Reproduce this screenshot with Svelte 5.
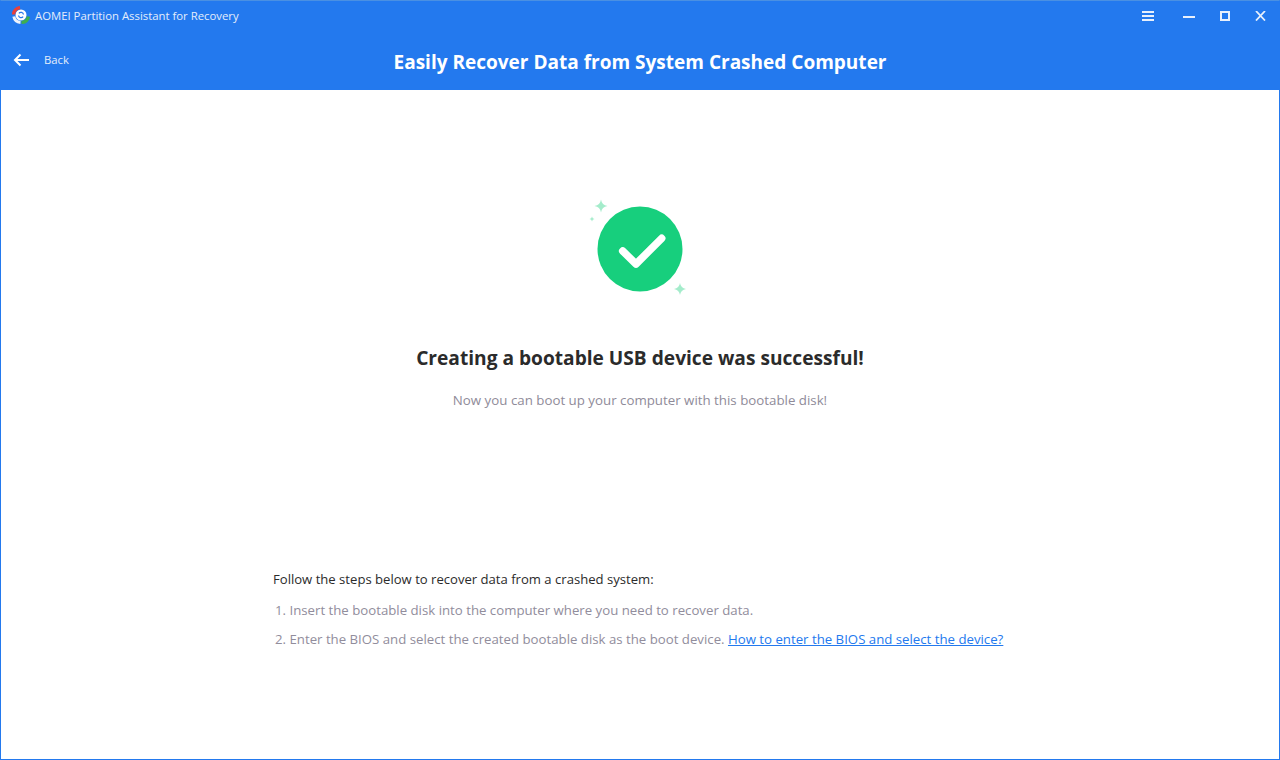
<script>
  const steps = [
    { text: 'Insert the bootable disk into the computer where you need to recover data.' },
    { text: 'Enter the BIOS and select the created bootable disk as the boot device.', link: 'How to enter the BIOS and select the device?' }
  ]
</script>

<div class="window">
  <header class="head">
    <div class="titlebar">
      <svg class="logo" width="18" height="18" viewBox="0 0 18 18">
        <circle cx="9" cy="9" r="5.500" fill="#fff"/>
        <path d="M1.500 8.500A7.500 7.500 0 0 1 8 1.600" fill="none" stroke="#e8403a" stroke-width="3.400"/>
        <path d="M1.800 10.500A7.500 7.500 0 0 0 8.500 16.500" fill="none" stroke="#eef3fb" stroke-width="3"/>
        <path d="M9.500 16.400A7.500 7.500 0 0 0 16.400 10.500" fill="none" stroke="#3fae4e" stroke-width="3.400"/>
        <path d="M11.500 8.500a2.600 2.600 0 0 0-4.600-1.200M6.500 9.500a2.600 2.600 0 0 0 4.600 1.200" fill="none" stroke="#2b78e8" stroke-width="1.300"/>
      </svg>
      <span class="app-name">AOMEI Partition Assistant for Recovery</span>
      <div class="controls">
        <svg class="menu" width="12" height="10" viewBox="0 0 12 10"><path d="M0 1h12M0 5h12M0 9h12" stroke="#e8f0fc" stroke-width="2"/></svg>
        <svg width="12" height="10" viewBox="0 0 12 10"><path d="M0 6h12" stroke="#e8f0fc" stroke-width="2"/></svg>
        <svg width="10" height="10" viewBox="0 0 10 10"><rect x="1" y="1" width="8" height="8" fill="none" stroke="#e8f0fc" stroke-width="2"/></svg>
        <svg width="11" height="10" viewBox="0 0 11 10"><path d="M1 0l9 9.500M10 0 1 9.500" stroke="#e8f0fc" stroke-width="1.800"/></svg>
      </div>
    </div>
    <div class="navbar">
      <div class="back">
        <svg width="17" height="14" viewBox="0 0 17 14"><path d="M16 7H2M7.500 1.500 2 7l5.500 5.500" fill="none" stroke="#fff" stroke-width="2"/></svg>
        <span>Back</span>
      </div>
      <h1>Easily Recover Data from System Crashed Computer</h1>
    </div>
  </header>

  <main class="content">
    <div class="result">
      <svg class="badge" width="100" height="100" viewBox="0 0 100 100">
        <circle cx="51" cy="50" r="42.500" fill="#17cf7d"/>
        <path d="M33.700 52 47 65 72.700 39.300" fill="none" stroke="#fff" stroke-width="7.500" stroke-linecap="round" stroke-linejoin="round"/>
        <path d="M12 .5Q12.800 6.200 18.500 7 12.800 7.800 12 13.500 11.200 7.800 5.500 7 11.200 6.200 12 .5Z" fill="#a4eccb"/>
        <path d="M3 17.500Q3.300 19.700 5.500 20 3.300 20.300 3 22.500 2.700 20.300 .5 20 2.700 19.700 3 17.500Z" fill="#a4eccb"/>
        <path d="M91 84Q91.800 89.200 97 90 91.800 90.800 91 96 90.200 90.800 85 90 90.200 89.200 91 84Z" fill="#a4eccb"/>
      </svg>
      <h2>Creating a bootable USB device was successful!</h2>
      <p class="sub">Now you can boot up your computer with this bootable disk!</p>
    </div>

    <div class="steps">
      <p class="lead">Follow the steps below to recover data from a crashed system:</p>
      {#each steps as step, i}
        <p class="step">
          {i + 1}. {step.text}
          {#if step.link}<a href="#bios">{step.link}</a>{/if}
        </p>
      {/each}
    </div>
  </main>
</div>

<style>
  :global(body) {
    font-family: "Open Sans", "Noto Sans", sans-serif;
    background: #fff;
  }

  .window {
    width: 1280px;
    height: 760px;
    box-sizing: border-box;
    display: flex;
    flex-direction: column;
    border: 1px solid #2379ee;
    border-top-color: #4a90e2;
    background: #fff;
  }

  .head {
    height: 89px;
    background: #2379ee;
    color: #fff;
    flex-shrink: 0;
  }

  .titlebar {
    height: 30px;
    display: flex;
    align-items: center;
    padding-left: 11px;
  }

  .logo {
    flex-shrink: 0;
    margin-top: -2px;
  }

  .app-name {
    margin: -2px 0 0 5px;
    font-size: 11.350px;
    color: #e4edfb;
  }

  .controls {
    margin-left: auto;
    display: flex;
    align-items: center;
    gap: 25px;
    padding-right: 13px;
  }

  .menu {
    margin-right: 4px;
  }

  .navbar {
    position: relative;
    height: 59px;
    display: flex;
    align-items: center;
    justify-content: center;
  }

  .back {
    position: absolute;
    left: 12px;
    top: 21px;
    display: flex;
    align-items: center;
    gap: 14px;
    font-size: 11.300px;
    color: #e4edfb;
  }

  h1 {
    margin: 5px 0 0;
    font-size: 19.030px;
    font-weight: 700;
    line-height: 1;
  }

  .content {
    flex: 1;
    display: flex;
    flex-direction: column;
  }

  .result {
    display: flex;
    flex-direction: column;
    align-items: center;
    padding-top: 109px;
  }

  .badge {
    margin-left: -3px;
    overflow: visible;
  }

  h2 {
    margin: 46px 0 0;
    font-size: 19.150px;
    font-weight: 700;
    line-height: 26px;
    color: #2b2b2b;
  }

  .sub {
    margin: 20px 0 0;
    font-size: 13.300px;
    line-height: 18px;
    color: #8f8b99;
  }

  .steps {
    margin: 161px 0 0 272px;
    font-size: 13.230px;
  }

  .lead {
    margin: 0 0 13px;
    font-size: 13.100px;
    line-height: 18px;
    color: #2b2b2b;
  }

  .step {
    margin: 11px 0 0 2px;
    line-height: 18px;
    color: #918d9c;
  }

  a {
    color: #2379ee;
  }
</style>
